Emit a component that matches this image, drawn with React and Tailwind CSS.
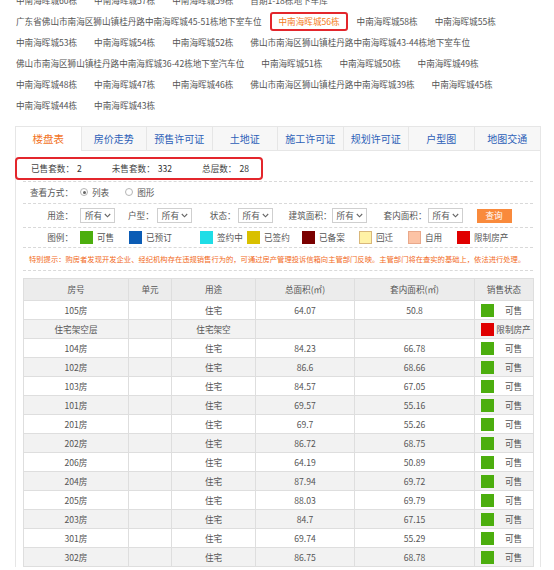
import React from 'react';

const linkRows = [
  ['中南海晖城60栋', '中南海晖城57栋', '中南海晖城59栋', '首期1-18栋地下车库'],
  ['广东省佛山市南海区狮山镇桂丹路中南海晖城45-51栋地下室车位', '中南海晖城56栋', '中南海晖城58栋', '中南海晖城55栋'],
  ['中南海晖城53栋', '中南海晖城54栋', '中南海晖城52栋', '佛山市南海区狮山镇桂丹路中南海晖城43-44栋地下室车位'],
  ['佛山市南海区狮山镇桂丹路中南海辉城36-42栋地下室汽车位', '中南海晖城51栋', '中南海晖城50栋', '中南海晖城49栋'],
  ['中南海晖城48栋', '中南海晖城47栋', '中南海晖城46栋', '佛山市南海区狮山镇桂丹路中南海晖城39栋', '中南海晖城45栋'],
  ['中南海晖城44栋', '中南海晖城43栋'],
];

const selected = '中南海晖城56栋';

const tabs = ['楼盘表', '房价走势', '预售许可证', '土地证', '施工许可证', '规划许可证', '户型图', '地图交通'];

const legend = [
  { label: '可售', box: 'bg-[#4cae0e]', w: 'w-[49px]' },
  { label: '已预订', box: 'bg-[#0b5cb5]', w: 'w-[71px]' },
  { label: '签约中', box: 'bg-[#1fdde6]', w: 'w-[47px]' },
  { label: '已签约', box: 'bg-[#d9c000]', w: 'w-[55px]' },
  { label: '已备案', box: 'bg-[#7a0000]', w: 'w-[57px]' },
  { label: '回迁', box: 'bg-[#fff2a6] border border-[#d9b77a]', w: 'w-[49px]' },
  { label: '自用', box: 'bg-[#fcc3a5] border border-[#e9a88a]', w: 'w-[49px]' },
  { label: '限制房产', box: 'bg-[#e00000]', w: 'w-[60px]' },
];

const rooms = [
  ['105房', '住宅', '64.07', '50.8', 'ok'],
  ['住宅架空层', '住宅架空', '', '', 'limit'],
  ['104房', '住宅', '84.23', '66.78', 'ok'],
  ['102房', '住宅', '86.6', '68.66', 'ok'],
  ['103房', '住宅', '84.57', '67.05', 'ok'],
  ['101房', '住宅', '69.57', '55.16', 'ok'],
  ['201房', '住宅', '69.7', '55.26', 'ok'],
  ['202房', '住宅', '86.72', '68.75', 'ok'],
  ['206房', '住宅', '64.19', '50.89', 'ok'],
  ['204房', '住宅', '87.94', '69.72', 'ok'],
  ['205房', '住宅', '88.03', '69.79', 'ok'],
  ['203房', '住宅', '84.7', '67.15', 'ok'],
  ['301房', '住宅', '69.74', '55.29', 'ok'],
  ['302房', '住宅', '86.75', '68.78', 'ok'],
];

const FakeSelect = ({ className = '' }) => (
  <div className={`flex items-center justify-between h-[15px] w-[35px] border border-[#cfcfcf] bg-white pl-[4px] pr-[3px] ${className}`}>
    <span>所有</span>
    <svg width="7" height="5" viewBox="0 0 7 5" className="text-[#666]">
      <polyline points="0.8,1 3.5,3.8 6.2,1" fill="none" stroke="currentColor" strokeWidth="1.1" />
    </svg>
  </div>
);

const Radio = ({ checked }) => (
  <span className="inline-flex items-center justify-center w-[8px] h-[8px] rounded-full border border-[#b5b5b5] bg-white">
    {checked && <span className="w-[3px] h-[3px] rounded-full bg-[#666]" />}
  </span>
);

const Label = ({ children }) => <div className="w-[50px] text-right shrink-0">{children}</div>;

export default function App() {
  return (
    <div className="w-[554px] h-[570px] overflow-hidden bg-white text-[8.6px] text-[#555] font-['Noto_Sans_CJK_SC','Noto_Sans',sans-serif]">
      <div className="-mt-[10px]">
        {linkRows.map((row, i) => (
          <div key={i} className="flex h-[21px] items-center pl-[7.5px]">
            {row.map(name =>
              name === selected ? (
                <span key={name} className="inline-flex items-center h-[19px] px-[6.5px] border-2 border-[#e3262c] rounded-[3px] text-[#f47a20] whitespace-nowrap">
                  {name}
                </span>
              ) : (
                <span key={name} className="px-[8.5px] whitespace-nowrap">{name}</span>
              )
            )}
          </div>
        ))}
      </div>

      <div className="mt-[10px] ml-[15px] w-[526px] border border-b-0 border-[#e6e6e6]">
        <div className="grid grid-cols-8 h-[24px]">
          {tabs.map((t, i) => (
            <div
              key={t}
              className={
                i === 0
                  ? 'flex items-center justify-center border-r border-[#e6e6e6] bg-white text-[#f2741f] text-[10.5px]'
                  : `flex items-center justify-center border-b border-[#e6e6e6] bg-[#f7f7f7] text-[#2d5fb7] text-[10px] ${i < 7 ? 'border-r' : ''}`
              }
            >
              {t}
            </div>
          ))}
        </div>

        <div className="px-[7px]">
          <div className="pt-[6px] pb-[1px] border-b border-dashed border-[#d9d9d9]">
            <div className="-ml-[8px] w-[248px] h-[23px] flex items-center pl-[14px] border-2 border-[#e3262c] rounded-[4px] text-[#444]">
              <span>已售套数：</span><span className="ml-[3px] text-[#333]">2</span>
              <span className="ml-[30px]">未售套数：</span><span className="ml-[3px] text-[#333]">332</span>
              <span className="ml-[30px]">总层数：</span><span className="ml-[3px] text-[#333]">28</span>
            </div>
          </div>

          <div className="flex items-center h-[22px] border-b border-dashed border-[#d9d9d9]">
            <Label>查看方式：</Label>
            <div className="ml-[7px] flex items-center">
              <Radio checked />
              <span className="ml-[4px]">列表</span>
              <span className="ml-[16px]"><Radio /></span>
              <span className="ml-[4px]">图形</span>
            </div>
          </div>

          <div className="flex items-center h-[24px] border-b border-dashed border-[#d9d9d9]">
            <Label>用途：</Label>
            <FakeSelect className="ml-[7px]" />
            <span className="ml-[13px]">户型：</span>
            <FakeSelect className="ml-[3px]" />
            <span className="ml-[18px]">状态：</span>
            <FakeSelect className="ml-[2px]" />
            <span className="ml-[16px]">建筑面积：</span>
            <FakeSelect className="ml-[0px]" />
            <span className="ml-[17px]">套内面积：</span>
            <FakeSelect className="ml-[1px]" />
            <div className="ml-[14px] flex items-center justify-center w-[35px] h-[14px] bg-[#f98a3c] text-white">查询</div>
          </div>

          <div className="flex items-center h-[20px] border-b border-dashed border-[#d9d9d9]">
            <Label>图例：</Label>
            <div className="ml-[7px] flex items-center">
              {legend.map(l => (
                <div key={l.label} className={`flex items-center shrink-0 ${l.w}`}>
                  <span className={`w-[13px] h-[13px] box-border ${l.box}`} />
                  <span className="ml-[4px]">{l.label}</span>
                </div>
              ))}
            </div>
          </div>

          <div className="flex items-center h-[23px] pl-[6px] border-b border-dashed border-[#d9d9d9] text-[7.3px] text-[#f26a1b] whitespace-nowrap">
            特别提示：购房者发现开发企业、经纪机构存在违规销售行为的，可通过房产管理投诉信箱向主管部门反映。主管部门将在查实的基础上，依法进行处理。
          </div>

          <table className="mt-[7px] w-[510px] table-fixed border-collapse text-center">
            <colgroup>
              <col className="w-[105px]" />
              <col className="w-[43px]" />
              <col className="w-[84px]" />
              <col className="w-[99px]" />
              <col className="w-[120px]" />
              <col className="w-[59px]" />
            </colgroup>
            <thead>
              <tr className="h-[22px] bg-[#ececec]">
                {['房号', '单元', '用途', '总面积(㎡)', '套内面积(㎡)', '销售状态'].map(h => (
                  <th key={h} className="font-normal border border-[#dedede] p-0">{h}</th>
                ))}
              </tr>
            </thead>
            <tbody>
              {rooms.map((r, i) => (
                <tr key={r[0]} className={`h-[19px] ${i % 2 === 1 ? 'bg-[#f2f2f2]' : 'bg-white'}`}>
                  <td className="border border-[#dedede] p-0">{r[0]}</td>
                  <td className="border border-[#dedede] p-0"></td>
                  <td className="border border-[#dedede] p-0">{r[1]}</td>
                  <td className="border border-[#dedede] p-0">{r[2]}</td>
                  <td className="border border-[#dedede] p-0">{r[3]}</td>
                  <td className="border border-[#dedede] p-0">
                    <div className="flex items-center pl-[6px]">
                      <span className={`w-[13px] h-[13px] shrink-0 ${r[4] === 'ok' ? 'bg-[#4cae0e]' : 'bg-[#e00000]'}`} />
                      <span className="flex-1 text-center whitespace-nowrap">{r[4] === 'ok' ? '可售' : '限制房产'}</span>
                    </div>
                  </td>
                </tr>
              ))}
            </tbody>
          </table>
        </div>
      </div>
    </div>
  );
}
